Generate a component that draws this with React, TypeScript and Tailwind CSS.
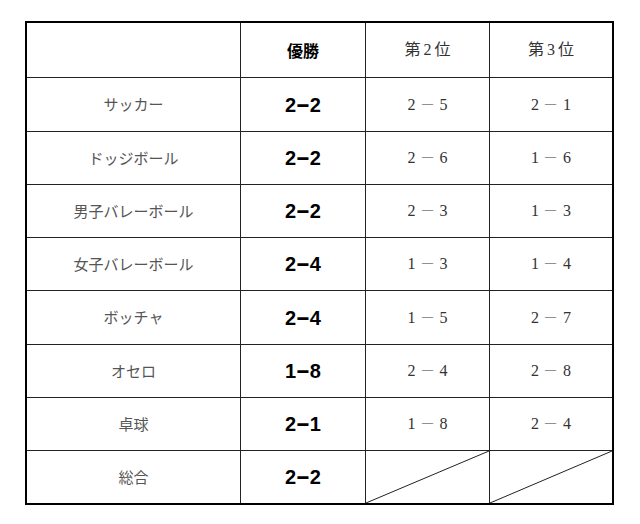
const rows: { name: string; win: string; second: string; third: string; h: string }[] = [
  { name: 'サッカー', win: '2-2', second: '2-5', third: '2-1', h: 'h-[54px]' },
  { name: 'ドッジボール', win: '2-2', second: '2-6', third: '1-6', h: 'h-[53px]' },
  { name: '男子バレーボール', win: '2-2', second: '2-3', third: '1-3', h: 'h-[53px]' },
  { name: '女子バレーボール', win: '2-4', second: '1-3', third: '1-4', h: 'h-[53px]' },
  { name: 'ボッチャ', win: '2-4', second: '1-5', third: '2-7', h: 'h-[54px]' },
  { name: 'オセロ', win: '1-8', second: '2-4', third: '2-8', h: 'h-[53px]' },
  { name: '卓球', win: '2-1', second: '1-8', third: '2-4', h: 'h-[53px]' },
]

const jp = "font-['Noto_Sans_CJK_JP',sans-serif]"
const serif = "font-['Liberation_Serif','Noto_Sans_CJK_JP',serif]"
const bold = "font-['Liberation_Sans','Noto_Sans_CJK_JP',sans-serif]"

function Score({ value }: { value: string }) {
  const [a, b] = value.split('-')
  return (
    <div className={`flex items-center justify-center text-[16px] text-[#333] ${serif}`}>
      <span className="w-[14px] text-center">{a}</span>
      <span className="w-[18px] text-center text-[#777]"><span className="inline-block scale-x-150">−</span></span>
      <span className="w-[14px] text-center">{b}</span>
    </div>
  )
}

function Win({ value }: { value: string }) {
  const [a, b] = value.split('-')
  return (
    <div className={`flex items-center justify-center text-[20px] font-bold text-black ${bold}`}>
      <span>{a}</span>
      <span className="mx-[1px] inline-block scale-x-110 scale-y-125">−</span>
      <span>{b}</span>
    </div>
  )
}

function Slash() {
  return (
    <svg className="absolute inset-0 h-full w-full" preserveAspectRatio="none" viewBox="0 0 100 100">
      <line x1="0" y1="100" x2="100" y2="0" stroke="#222" strokeWidth="1" vectorEffect="non-scaling-stroke" />
    </svg>
  )
}

export default function App() {
  const cell = 'flex items-center justify-center border-r border-b border-[#222]'
  const last = 'flex items-center justify-center border-b border-[#222]'
  return (
    <div className="min-h-[524px] w-[640px] bg-white pt-[21px] pl-[25px]">
      <div className="grid w-[589px] grid-cols-[214px_125px_124px_122px] border-2 border-black">
        <div className={`${cell} h-[55px]`} />
        <div className={`${cell} h-[55px] text-[16px] font-bold text-black ${jp}`}>優勝</div>
        <div className={`${cell} h-[55px] text-[16px] text-[#333] ${serif}`}>第<span className="mx-[3px]">2</span>位</div>
        <div className={`${last} h-[55px] text-[16px] text-[#333] ${serif}`}>第<span className="mx-[3px]">3</span>位</div>

        {rows.map((r) => (
          <div key={r.name} className="contents">
            <div className={`${cell} ${r.h} text-[15px] text-[#555] ${jp}`}>{r.name}</div>
            <div className={`${cell} ${r.h}`}><Win value={r.win} /></div>
            <div className={`${cell} ${r.h}`}><Score value={r.second} /></div>
            <div className={`${last} ${r.h}`}><Score value={r.third} /></div>
          </div>
        ))}

        <div className={`flex h-[52px] items-center justify-center border-r border-[#222] text-[15px] text-[#555] ${jp}`}>総合</div>
        <div className="flex h-[52px] items-center justify-center border-r border-[#222]"><Win value="2-2" /></div>
        <div className="relative h-[52px] border-r border-[#222]"><Slash /></div>
        <div className="relative h-[52px]"><Slash /></div>
      </div>
    </div>
  )
}
